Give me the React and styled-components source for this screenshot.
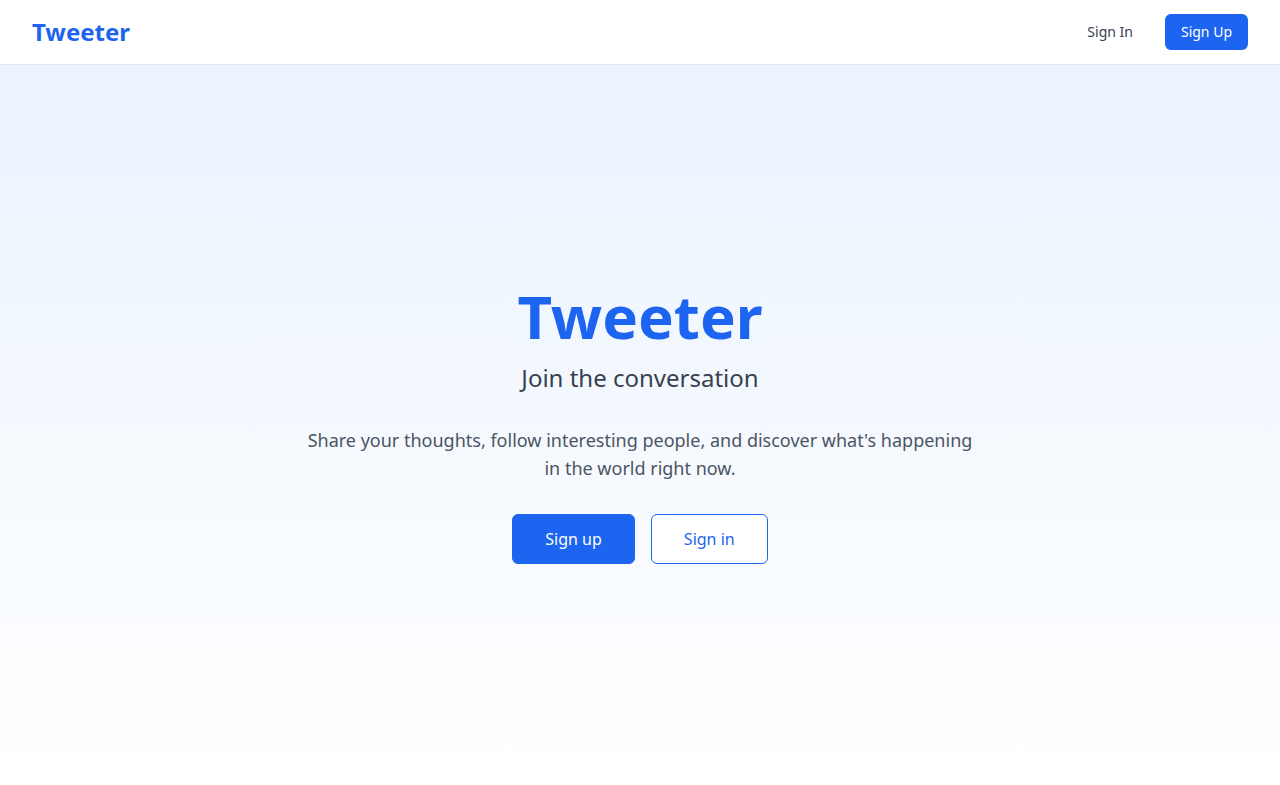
import React from 'react'
import styled, { createGlobalStyle } from 'styled-components'

const GlobalStyle = createGlobalStyle`
  * { box-sizing: border-box; }
  body {
    margin: 0;
    font-family: "Noto Sans", "Open Sans", sans-serif;
    background: #ffffff;
  }
`

const blue = '#1d64f0'

const Page = styled.div`
  min-height: 100vh;
  display: flex;
  flex-direction: column;
`

const Header = styled.header`
  height: 65px;
  display: flex;
  align-items: center;
  justify-content: space-between;
  padding: 0 32px 1px;
  background: #ffffff;
  border-bottom: 1px solid #e5e7eb;
`

const Logo = styled.a`
  font-size: 24px;
  font-weight: 700;
  color: ${blue};
  text-decoration: none;
`

const Nav = styled.nav`
  display: flex;
  align-items: center;
  gap: 16px;
`

const NavButton = styled.button`
  font-family: inherit;
  font-size: 14px;
  height: 36px;
  padding: 0 16px;
  border-radius: 6px;
  border: none;
  cursor: pointer;
  background: ${p => (p.primary ? blue : 'transparent')};
  color: ${p => (p.primary ? '#ffffff' : '#374151')};
`

const Main = styled.main`
  flex: 1;
  display: flex;
  align-items: center;
  justify-content: center;
  background: linear-gradient(to bottom, #eaf3fe, #ffffff);
`

const Hero = styled.section`
  display: flex;
  flex-direction: column;
  align-items: center;
  text-align: center;
`

const Title = styled.h1`
  margin: 0;
  font-size: 60px;
  line-height: 60px;
  font-weight: 700;
  color: ${blue};
`

const Subtitle = styled.h2`
  margin: 16px 0 0;
  font-size: 24px;
  line-height: 32px;
  font-weight: 400;
  color: #374151;
`

const Lead = styled.p`
  margin: 32px 0 0;
  max-width: 672px;
  font-size: 18px;
  line-height: 28px;
  color: #4b5563;
`

const Actions = styled.div`
  display: flex;
  gap: 16px;
  margin-top: 32px;
`

const CtaButton = styled.button`
  font-family: inherit;
  font-size: 16px;
  height: 50px;
  padding: 0 32px;
  border-radius: 6px;
  cursor: pointer;
  border: 1px solid ${blue};
  background: ${p => (p.primary ? blue : '#ffffff')};
  color: ${p => (p.primary ? '#ffffff' : blue)};
`

export default function App() {
  return (
    <Page>
      <GlobalStyle />
      <Header>
        <Logo href="#">Tweeter</Logo>
        <Nav>
          <NavButton>Sign In</NavButton>
          <NavButton primary>Sign Up</NavButton>
        </Nav>
      </Header>
      <Main>
        <Hero>
          <Title>Tweeter</Title>
          <Subtitle>Join the conversation</Subtitle>
          <Lead>
            Share your thoughts, follow interesting people, and discover what's happening in the world right now.
          </Lead>
          <Actions>
            <CtaButton primary>Sign up</CtaButton>
            <CtaButton>Sign in</CtaButton>
          </Actions>
        </Hero>
      </Main>
    </Page>
  )
}
